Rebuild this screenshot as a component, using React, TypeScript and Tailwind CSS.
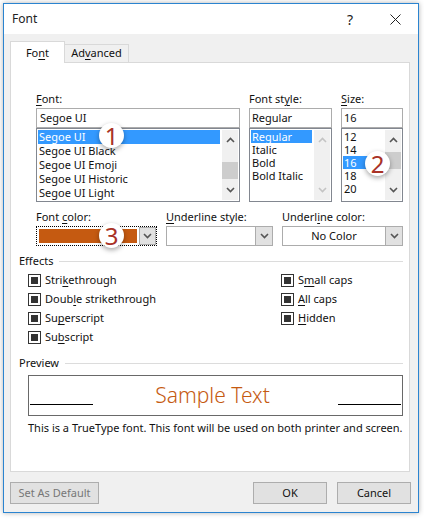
import React from 'react';

const Chevron = ({ up = false, light = false }: { up?: boolean; light?: boolean }) => (
  <svg width="9" height="6" viewBox="0 0 9 6" fill="none" stroke={light ? '#c4c4c4' : '#555555'} strokeWidth="1.6">
    {up ? <path d="M1 5l3.5-3.5L8 5" /> : <path d="M1 1l3.5 3.5L8 1" />}
  </svg>
);

const Scrollbar = ({ light = false, before = 0, thumb = 0 }: { light?: boolean; before?: number; thumb?: number }) => (
  <div className="w-[16px] shrink-0 m-[1px] bg-[#f0f0f0] flex flex-col items-center justify-between relative py-[7px]">
    <Chevron up light={light} />
    {thumb > 0 && (
      <div className="absolute left-0 right-0 bg-[#cdcdcd]" style={{ top: before, height: thumb }} />
    )}
    <Chevron light={light} />
  </div>
);

const Callout = ({ n, className }: { n: string; className: string }) => (
  <div
    className={`absolute w-[25px] h-[25px] rounded-full bg-white shadow-[0_2px_5px_rgba(0,0,0,0.35)] flex items-center justify-center text-[24px] leading-none text-[#a93226] ${className}`}
  >
    {n}
  </div>
);

const Check = ({ children }: { children: React.ReactNode }) => (
  <div className="flex items-center h-[19px]">
    <div className="w-[13px] h-[13px] border-[1px] border-[#333333] flex items-center justify-center mr-[4px]">
      <div className="w-[7px] h-[7px] bg-[#333333]" />
    </div>
    <span>{children}</span>
  </div>
);

const Combo = ({ width, label, children }: { width: string; label: React.ReactNode; children?: React.ReactNode }) => (
  <div className={width}>
    <div className="h-[16px] leading-[16px] mb-[1px]">{label}</div>
    <div className="h-[20px] border border-[#acacac] flex items-center bg-white">
      <div className="flex-1 text-center">{children}</div>
      <div className="w-[17px] h-[18px] bg-[#e1e1e1] border-l border-[#acacac] flex items-center justify-center">
        <Chevron />
      </div>
    </div>
  </div>
);

export default function App() {
  const u = (s: string) => <span className="underline underline-offset-2">{s}</span>;

  return (
    <div className="w-[424px] h-[520px] bg-white pl-[3px] pt-[3px] font-['Noto_Sans',sans-serif] text-[11px] text-[#111111] relative overflow-hidden">
      <div className="w-[416px] h-[510px] border border-[#2b84d0] bg-[#f0f0f0] shadow-[0_0_5px_rgba(0,0,0,0.3)] flex flex-col">
        {/* Title bar */}
        <div className="h-[30px] bg-white flex items-center shrink-0 pl-[8px] text-[#222222]">
          <span className="text-[12px]">Font</span>
          <span className="ml-auto text-[14px] mr-[37px]">?</span>
          <svg className="mr-[17px]" width="11" height="11" viewBox="0 0 11 11" stroke="#222222" strokeWidth="1" fill="none">
            <path d="M0.5 0.5l10 10M10.5 0.5l-10 10" />
          </svg>
        </div>

        <div className="flex-1 pl-[6px] pr-[7px] pt-[7px]">
          {/* Tabs */}
          <div className="flex items-end h-[22px] relative z-10">
            <div className="w-[55px] h-[22px] bg-white border border-b-0 border-[#d9d9d9] flex items-center justify-center pt-[2px]">
              <span>Fo{u('n')}t</span>
            </div>
            <div className="w-[64px] h-[19px] bg-[#f0f0f0] border border-l-0 border-[#d9d9d9] flex items-center justify-center">
              <span>Ad{u('v')}anced</span>
            </div>
          </div>

          {/* Panel */}
          <div className="h-[410px] -mt-[1px] border border-[#d9d9d9] bg-white pt-[28px] w-[400px]">
            <div className="flex gap-[9px] pl-[25px]">
              <div className="w-[204px]">
                <div className="h-[16px] leading-[16px] mb-[1px]">{u('F')}ont:</div>
                <div className="h-[20px] border border-[#acacac] pl-[3px] flex items-center">Segoe UI</div>
                <div className="h-[74px] border border-[#828790] flex">
                  <div className="flex-1 pt-[1px] px-[1px]">
                    <div className="h-[14px] leading-[14px] bg-[#3399ff] text-white pl-[1px]">Segoe UI</div>
                    <div className="h-[14px] leading-[14px] pl-[1px]">Segoe UI Black</div>
                    <div className="h-[14px] leading-[14px] pl-[1px]">Segoe UI Emoji</div>
                    <div className="h-[14px] leading-[14px] pl-[1px]">Segoe UI Historic</div>
                    <div className="h-[14px] leading-[14px] pl-[1px]">Segoe UI Light</div>
                  </div>
                  <Scrollbar before={32} thumb={17} />
                </div>
              </div>
              <div className="w-[83px]">
                <div className="h-[16px] leading-[16px] mb-[1px]">Font st{u('y')}le:</div>
                <div className="h-[20px] border border-[#acacac] pl-[2px] flex items-center">Regular</div>
                <div className="h-[74px] border border-[#828790] flex">
                  <div className="flex-1 pt-[1px] px-[1px]">
                    <div className="h-[13px] leading-[13px] bg-[#3399ff] text-white pl-[1px]">Regular</div>
                    <div className="h-[13px] leading-[13px] pl-[1px]">Italic</div>
                    <div className="h-[13px] leading-[13px] pl-[1px]">Bold</div>
                    <div className="h-[13px] leading-[13px] pl-[1px]">Bold Italic</div>
                  </div>
                  <Scrollbar light />
                </div>
              </div>
              <div className="w-[62px]">
                <div className="h-[16px] leading-[16px] mb-[1px]">{u('S')}ize:</div>
                <div className="h-[20px] border border-[#acacac] pl-[2px] flex items-center">16</div>
                <div className="h-[74px] border border-[#828790] flex">
                  <div className="flex-1 pt-[1px] px-[1px]">
                    <div className="h-[13px] leading-[13px] pl-[1px]">12</div>
                    <div className="h-[13px] leading-[13px] pl-[1px]">14</div>
                    <div className="h-[13px] leading-[13px] bg-[#3399ff] text-white pl-[1px]">16</div>
                    <div className="h-[13px] leading-[13px] pl-[1px]">18</div>
                    <div className="h-[13px] leading-[13px] pl-[1px]">20</div>
                  </div>
                  <Scrollbar before={22} thumb={17} />
                </div>
              </div>
            </div>

            <div className="flex gap-[9px] pl-[25px] mt-[7px]">
              <div className="w-[121px]">
                <div className="h-[16px] leading-[16px] mb-[1px]">Font {u('c')}olor:</div>
                <div className="h-[20px] border border-dotted border-black p-[2px] flex items-stretch bg-white">
                  <div className="flex-1 bg-[#c55a11]" />
                  <div className="w-[17px] -my-[2px] -mr-[2px] ml-[2px] bg-[#e1e1e1] border border-[#acacac] flex items-center justify-center">
                    <Chevron />
                  </div>
                </div>
              </div>
              <Combo width="w-[107px]" label={<>{u('U')}nderline style:</>} />
              <Combo width="w-[121px]" label={<>Underl{u('i')}ne color:</>}>No Color</Combo>
            </div>

            {/* Effects */}
            <div className="flex items-center pl-[8px] mt-[7px] pr-[6px] h-[16px]">
              <span>Effects</span>
              <div className="flex-1 h-px bg-[#dcdcdc] ml-[6px]" />
            </div>
            <div className="flex pl-[17px] mt-[2px]">
              <div className="w-[253px]">
                <Check>Stri{u('k')}ethrough</Check>
                <Check>Doub{u('l')}e strikethrough</Check>
                <Check>Su{u('p')}erscript</Check>
                <Check>Su{u('b')}script</Check>
              </div>
              <div>
                <Check>S{u('m')}all caps</Check>
                <Check>{u('A')}ll caps</Check>
                <Check>{u('H')}idden</Check>
              </div>
            </div>

            {/* Preview */}
            <div className="flex items-center pl-[8px] mt-[8px] pr-[6px] h-[16px]">
              <span>Preview</span>
              <div className="flex-1 h-px bg-[#dcdcdc] ml-[6px]" />
            </div>
            <div className="ml-[17px] mr-[6px] mt-[4px] h-[41px] border border-[#696969] flex items-end justify-between px-[1px] pb-[10px] relative">
              <div className="w-[63px] h-px bg-black" />
              <div className="absolute inset-0 pr-[6px] flex items-center justify-center text-[21px] font-light text-[#c55a11]">Sample Text</div>
              <div className="w-[63px] h-px bg-black" />
            </div>
            <div className="ml-[17px] mt-[4px] leading-[16px] whitespace-nowrap">
              This is a TrueType font. This font will be used on both printer and screen.
            </div>
          </div>

          {/* Footer buttons */}
          <div className="flex mt-[10px] w-[401px]">
            <div className="w-[89px] h-[22px] bg-[#e1e1e1] border border-[#adadad] text-[#777777] flex items-center justify-center">
              Set As Default
            </div>
            <div className="w-[74px] h-[22px] bg-[#e1e1e1] border border-[#adadad] flex items-center justify-center ml-auto">OK</div>
            <div className="w-[74px] h-[22px] bg-[#e1e1e1] border border-[#adadad] flex items-center justify-center ml-[10px]">Cancel</div>
          </div>
        </div>
      </div>

      {/* Numbered callouts over the dialog */}
      <Callout n="1" className="left-[99px] top-[123px]" />
      <Callout n="2" className="left-[365px] top-[151px]" />
      <Callout n="3" className="left-[99px] top-[223px]" />
    </div>
  );
}
